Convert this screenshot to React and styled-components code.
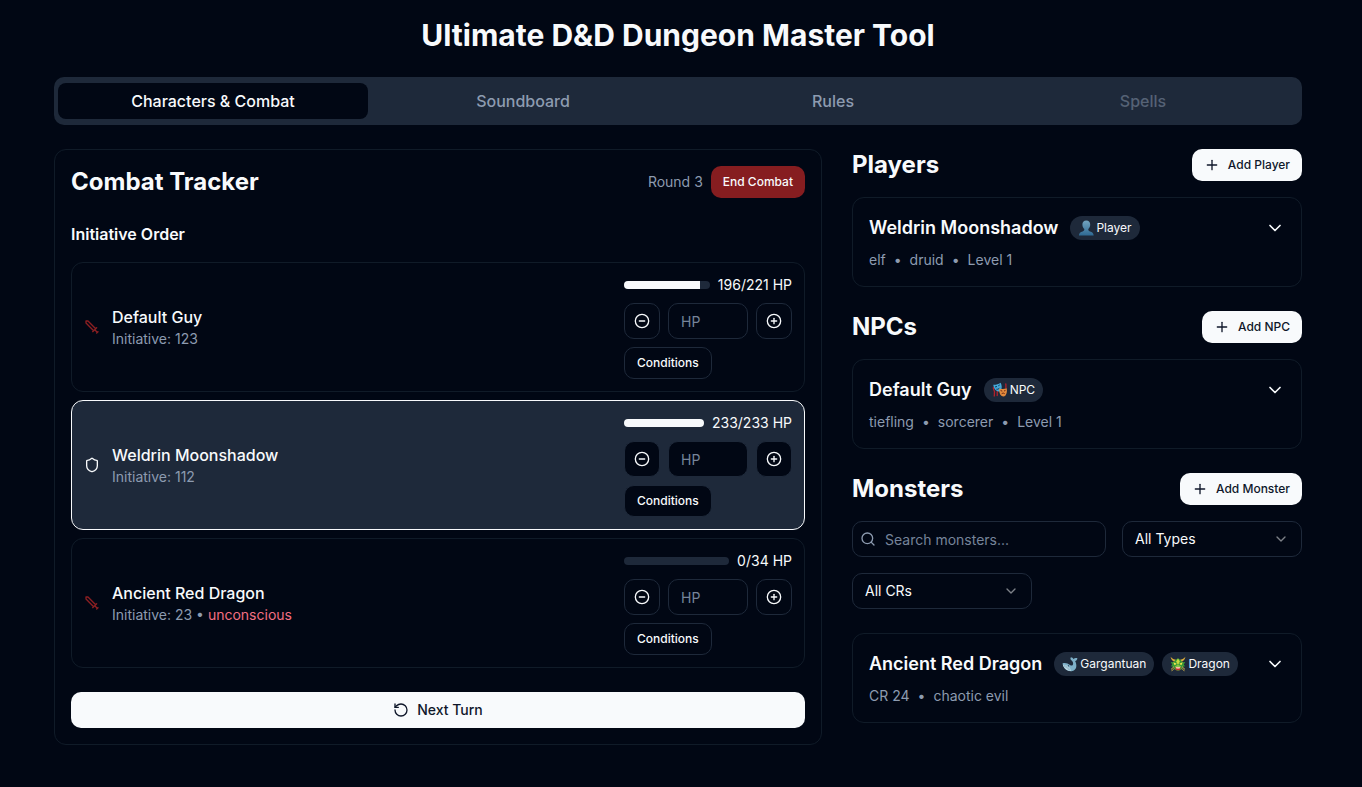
import React from "react";
import styled, { createGlobalStyle, css } from "styled-components";
import {
  ChevronDown,
  CircleMinus,
  CirclePlus,
  Plus,
  RotateCcw,
  Search,
  Shield,
} from "lucide-react";

const color = {
  background: "#010714",
  foreground: "#f8fafc",
  muted: "#1e293a",
  mutedText: "#8d9bb0",
  placeholder: "#76849a",
  faintBorder: "#101b28",
  destructive: "#861d20",
  sword: "#8c1f22",
  rose: "#f26f82",
  ink: "#0f172a",
};

const GlobalStyle = createGlobalStyle`
  *, *::before, *::after { box-sizing: border-box; }
  body {
    margin: 0;
    background: ${color.background};
    color: ${color.foreground};
    font-family: Inter, "Liberation Sans", sans-serif;
    font-size: 16px;
    line-height: 24px;
  }
  h1, h2, h3, p, ul { margin: 0; padding: 0; }
  ul { list-style: none; }
  button, input, select { font: inherit; color: inherit; margin: 0; }
  button { cursor: pointer; }
  svg { flex-shrink: 0; }
`;

const Page = styled.div`
  padding: 17px 22px 16px 16px;
`;

const Container = styled.main`
  max-width: 1248px;
  margin: 0 auto;
  display: flex;
  flex-direction: column;
  gap: 24px;
`;

const Title = styled.h1`
  font-size: 30px;
  line-height: 36px;
  font-weight: 700;
  text-align: center;
`;

const Tabs = styled.nav`
  display: grid;
  grid-template-columns: repeat(4, 1fr);
  align-items: center;
  height: 48px;
  padding: 4px;
  border-radius: 10px;
  background: ${color.muted};
`;

const Tab = styled.button`
  height: 36px;
  border: 0;
  border-radius: 8px;
  font-weight: 500;
  background: ${(p) => (p.$active ? color.background : "transparent")};
  color: ${(p) => (p.$active ? color.foreground : color.mutedText)};
  &:disabled { opacity: 0.5; cursor: default; }
`;

const Columns = styled.div`
  display: grid;
  grid-template-columns: minmax(0, 1fr) 450px;
  gap: 30px;
  align-items: start;
`;

const Tracker = styled.section`
  padding: 16px;
  border: 1px solid ${color.faintBorder};
  border-radius: 12px;
  display: flex;
  flex-direction: column;
  gap: 24px;
`;

const HeaderRow = styled.header`
  display: flex;
  align-items: center;
  justify-content: space-between;
`;

const Heading = styled.h2`
  font-size: 24px;
  line-height: 32px;
  font-weight: 700;
`;

const RoundStatus = styled.div`
  display: flex;
  align-items: center;
  gap: 8px;
  font-size: 14px;
  line-height: 20px;
  color: ${color.mutedText};
`;

const Button = styled.button`
  display: inline-flex;
  align-items: center;
  justify-content: center;
  gap: 8px;
  height: 32px;
  padding: 0 12px;
  border: 0;
  border-radius: 10px;
  font-size: 12px;
  line-height: 16px;
  font-weight: 500;
  background: ${color.foreground};
  color: ${color.ink};
  ${(p) => p.$variant === "danger" && css`
    background: ${color.destructive};
    color: ${color.foreground};
  `}
  ${(p) => p.$variant === "outline" && css`
    background: ${color.background};
    color: ${color.foreground};
    border: 1px solid ${color.muted};
  `}
  ${(p) => p.$size === "icon" && css`
    width: 36px;
    height: 36px;
    padding: 0;
  `}
  ${(p) => p.$size === "wide" && css`
    width: 100%;
    height: 36px;
    font-size: 14px;
    line-height: 20px;
  `}
`;

const Initiative = styled.div`
  display: flex;
  flex-direction: column;
  gap: 16px;
`;

const SubHeading = styled.h3`
  font-size: 16px;
  line-height: 24px;
  font-weight: 600;
`;

const CombatantList = styled.ul`
  display: flex;
  flex-direction: column;
  gap: 8px;
`;

const CombatantRow = styled.li`
  display: flex;
  align-items: center;
  gap: 12px;
  padding: 12px;
  border: 1px solid ${(p) => (p.$current ? color.foreground : color.faintBorder)};
  border-radius: 12px;
  background: ${(p) => (p.$current ? color.muted : "transparent")};
`;

const CombatantInfo = styled.div`
  flex: 1;
  min-width: 0;
`;

const CombatantName = styled.p`
  font-weight: 500;
`;

const SmallText = styled.p`
  font-size: 14px;
  line-height: 20px;
  color: ${color.mutedText};
`;

const Condition = styled.span`
  color: ${color.rose};
`;

const Controls = styled.div`
  width: 168px;
  display: flex;
  flex-direction: column;
  align-items: flex-start;
  gap: 8px;
`;

const ControlLine = styled.div`
  width: 100%;
  display: flex;
  align-items: center;
  gap: 8px;
  font-size: 14px;
  line-height: 20px;
`;

const HealthTrack = styled.div`
  flex: 1;
  height: 8px;
  border-radius: 4px;
  overflow: hidden;
  background: ${color.muted};
`;

const HealthFill = styled.div`
  height: 100%;
  background: ${color.foreground};
`;

const HpInput = styled.input`
  width: 80px;
  height: 36px;
  padding: 0 12px;
  border: 1px solid ${color.muted};
  border-radius: 10px;
  background: ${color.background};
  &::placeholder { color: ${color.placeholder}; opacity: 1; }
`;

const Roster = styled.div`
  display: flex;
  flex-direction: column;
  gap: 24px;
`;

const RosterSection = styled.section`
  display: flex;
  flex-direction: column;
  gap: 16px;
`;

const Filters = styled.div`
  display: flex;
  flex-wrap: wrap;
  gap: 16px;
  margin-bottom: 8px;
  font-size: 14px;
  line-height: 20px;
`;

const SearchBox = styled.label`
  flex: 1;
  min-width: 200px;
  height: 36px;
  padding: 0 8px 0 7px;
  display: flex;
  align-items: center;
  gap: 9px;
  border: 1px solid ${color.muted};
  border-radius: 10px;
  color: ${color.mutedText};
`;

const SearchInput = styled.input`
  flex: 1;
  min-width: 0;
  height: 100%;
  padding: 0;
  border: 0;
  outline: 0;
  background: transparent;
  color: ${color.foreground};
  &::placeholder { color: ${color.placeholder}; opacity: 1; }
`;

const SelectBox = styled.div`
  position: relative;
  width: 180px;
  height: 36px;
  svg {
    position: absolute;
    right: 13px;
    top: 10px;
    opacity: 0.5;
    pointer-events: none;
  }
`;

const Select = styled.select`
  appearance: none;
  width: 100%;
  height: 100%;
  padding: 0 36px 0 12px;
  border: 1px solid ${color.muted};
  border-radius: 10px;
  background: transparent;
`;

const CreatureCardBox = styled.article`
  padding: 16px;
  border: 1px solid ${color.faintBorder};
  border-radius: 12px;
  display: flex;
  flex-direction: column;
  gap: 8px;
`;

const CreatureTop = styled.div`
  display: flex;
  align-items: center;
  height: 28px;
  gap: 8px;
`;

const CreatureName = styled.h3`
  font-size: 18px;
  line-height: 28px;
  font-weight: 600;
  margin-right: 4px;
`;

const Badge = styled.span`
  display: inline-flex;
  align-items: center;
  gap: 2px;
  height: 24px;
  padding: 0 8px;
  border-radius: 12px;
  font-size: 12px;
  line-height: 16px;
  background: ${color.muted};
`;

const ExpandButton = styled.button`
  display: flex;
  margin-left: auto;
  padding: 0;
  border: 0;
  background: transparent;
`;

const Meta = styled.div`
  display: flex;
  gap: 8px;
  font-size: 14px;
  line-height: 20px;
  color: ${color.mutedText};
`;

const SwordIcon = () => (
  <svg
    width="16"
    height="16"
    viewBox="0 0 24 24"
    fill="none"
    stroke={color.sword}
    strokeWidth="2"
    strokeLinecap="round"
    strokeLinejoin="round"
    aria-hidden="true"
  >
    <path d="M14.5 17.5L3 6V3h3l11.500 11.500M13 19l6-6M16 16l4 4M19 21l2-2" />
  </svg>
);

const PersonIcon = () => (
  <svg width="16" height="16" viewBox="0 0 16 16" aria-hidden="true">
    <defs>
      <linearGradient id="bust" x1="0" y1="0" x2="0" y2="1">
        <stop offset="0" stopColor="#74a5c0" />
        <stop offset="1" stopColor="#2f6a94" />
      </linearGradient>
    </defs>
    <path
      fill="url(#bust)"
      d="M8.300.4c2.600 0 4 1.800 3.900 4.300-.1 2-.9 3.400-1.900 4.300-.1 1.300.3 1.900 1.700 2.400 2.200.7 3.500 1.400 3.700 4H.9c.2-2.600 1.500-3.300 3.700-4 1.400-.5 1.800-1.100 1.700-2.400-1-.9-1.800-2.300-1.900-4.300C4.300 2.200 5.700.4 8.300.4z"
    />
  </svg>
);

const MasksIcon = () => (
  <svg width="16" height="16" viewBox="0 0 16 16" aria-hidden="true">
    <path d="M1.500 5c-1 2 1.500 3.500 1 5.500S3 13 2 14.500M13.500 1.500c1.200 1.500-.3 3 .7 5M5.500 9c-1 2 .5 3-.5 5" fill="none" stroke="#b3222c" strokeWidth="1.300" />
    <path d="M1.300 2.800C4 3 6 2.300 8.600.8c1.200 2.400 1.600 5.200.5 7.200-.8 1.400-2.200 1.800-3.600 1.300C2.800 8.300 1.500 5.600 1.300 2.800z" fill="#45a9d8" />
    <path d="M3 5l2-.5M6.300 3.800l1.400-.8M4.400 7.200c1.300.3 2.400-.2 3.200-1.400" fill="none" stroke="#0d3658" strokeWidth="1" />
    <path d="M7.300 6.500c2.400.8 4.800.8 7.400-.2.500 2.600.3 5.300-1.200 7.100-1 1.200-2.500 1.400-3.800.6-2.200-1.400-2.700-4.600-2.400-7.500z" fill="#e38b3d" />
    <path d="M8.600 8.600l1.700.5M12 9l1.500-.6M9.500 12.100c.7-1.200 2.200-1.400 3.200-.4" fill="none" stroke="#6f2b16" strokeWidth="1" />
  </svg>
);

const WhaleIcon = () => (
  <svg width="16" height="16" viewBox="0 0 16 16" aria-hidden="true">
    <path d="M.5 7.500C2.800 6.500 5.800 7.400 8 9c1.800 1.200 3.200.3 3.100-1.800C11 5.800 10.200 5 9.300 4.200 8.200 3.300 8.200 2 8.900 1.200c1.200.2 2.200.8 2.600 1.800 1-1 2.300-1.300 3.900-.8-.1 1.500-.9 2.500-2.300 2.800 2.200 4.200 1.700 9-2.700 10C5.600 16 1.300 12.500.5 7.500z" fill="#7eb0c8" />
    <path d="M1 9c2.200-.5 4.600.5 6.300 2.300 1.100 1.200 1.600 2.400 1.500 3.700C4.900 15 1.900 12.500 1 9z" fill="#bcd7e1" />
    <path d="M2 10.500c2 .4 4 1.600 5.500 4M2 9.400c2.500.5 4.600 2 6 4.500" fill="none" stroke="#6f9fb8" strokeWidth=".5" />
    <circle cx="6.500" cy="9.800" r=".6" fill="#12263b" />
  </svg>
);

const DragonIcon = () => (
  <svg width="16" height="16" viewBox="0 0 16 16" aria-hidden="true">
    <path d="M.6.8C1 3.500 2.500 5 4.500 6l2-2C4.200 3.600 2 2.800.6.8zM15.400.8C15 3.500 13.500 5 11.500 6l-2-2c2.300-.4 4.500-1.200 5.900-3.200z" fill="#dfae3b" />
    <path d="M.8 6l2.700.2L5.300 4 8 2.300 10.700 4l1.800 2.200 2.700-.2-1.400 2.500 1.200 1.700-2 .6-1.200 2.500L8 15l-3.800-1.700L3 10.800l-2-.6 1.200-1.700z" fill="#389638" />
    <path d="M8 2.500l1.900 3L8 9 6.100 5.500z" fill="#c9da3e" />
    <path d="M3.300 6.300l3.500 1.500-2.200 1.400zM12.700 6.300L9.200 7.800l2.200 1.400z" fill="#f5e94b" />
    <path d="M5 10.300L8 8.800l3 1.500-.7 1.500H5.700z" fill="#8bc846" />
    <path d="M5.200 11.200h5.600L10 14.300H6z" fill="#cf2f2d" />
    <path d="M5.700 11.200h4.600l-.8 1.200h-3z" fill="#fff1d5" />
    <path d="M4 10.800c-2 .2-.8 2.200-3 2.400M4.300 12.500c-1.500.2-.8 2-2.800 2.300M12 10.800c2 .2.800 2.200 3 2.400M11.700 12.500c1.500.2.800 2 2.800 2.300" fill="none" stroke="#cdb04a" strokeWidth=".9" />
  </svg>
);

const combatants = [
  { name: "Default Guy", initiative: 123, hp: 196, max: 221 },
  { name: "Weldrin Moonshadow", initiative: 112, hp: 233, max: 233, player: true, current: true },
  { name: "Ancient Red Dragon", initiative: 23, hp: 0, max: 34, condition: "unconscious" },
];

function Combatant({ name, initiative, hp, max, player, current, condition }) {
  return (
    <CombatantRow $current={current}>
      {player ? <Shield size={16} /> : <SwordIcon />}
      <CombatantInfo>
        <CombatantName>{name}</CombatantName>
        <SmallText>
          Initiative: {initiative}
          {condition && <> • <Condition>{condition}</Condition></>}
        </SmallText>
      </CombatantInfo>
      <Controls>
        <ControlLine>
          <HealthTrack>
            <HealthFill style={{ width: `${(hp / max) * 100}%` }} />
          </HealthTrack>
          <span>{hp}/{max} HP</span>
        </ControlLine>
        <ControlLine>
          <Button $variant="outline" $size="icon" aria-label={`Damage ${name}`}>
            <CircleMinus size={16} />
          </Button>
          <HpInput placeholder="HP" aria-label={`HP change for ${name}`} />
          <Button $variant="outline" $size="icon" aria-label={`Heal ${name}`}>
            <CirclePlus size={16} />
          </Button>
        </ControlLine>
        <Button $variant="outline">Conditions</Button>
      </Controls>
    </CombatantRow>
  );
}

function CreatureCard({ name, badges, meta }) {
  return (
    <CreatureCardBox>
      <CreatureTop>
        <CreatureName>{name}</CreatureName>
        {badges.map(({ label, Icon }) => (
          <Badge key={label}><Icon />{label}</Badge>
        ))}
        <ExpandButton aria-label={`Expand ${name}`}>
          <ChevronDown size={20} />
        </ExpandButton>
      </CreatureTop>
      <Meta>
        {meta.map((item, i) => (
          <React.Fragment key={item}>
            {i > 0 && <span>•</span>}
            <span>{item}</span>
          </React.Fragment>
        ))}
      </Meta>
    </CreatureCardBox>
  );
}

function SectionHeader({ title, action }) {
  return (
    <HeaderRow>
      <Heading>{title}</Heading>
      <Button><Plus size={16} />{action}</Button>
    </HeaderRow>
  );
}

function FilterSelect({ label, option }) {
  return (
    <SelectBox>
      <Select aria-label={label}>
        <option>{option}</option>
      </Select>
      <ChevronDown size={16} />
    </SelectBox>
  );
}

export default function App() {
  return (
    <Page>
      <GlobalStyle />
      <Container>
        <Title>Ultimate D&amp;D Dungeon Master Tool</Title>
        <Tabs>
          <Tab $active>Characters &amp; Combat</Tab>
          <Tab>Soundboard</Tab>
          <Tab>Rules</Tab>
          <Tab disabled>Spells</Tab>
        </Tabs>
        <Columns>
          <Tracker>
            <HeaderRow>
              <Heading>Combat Tracker</Heading>
              <RoundStatus>
                <span>Round 3</span>
                <Button $variant="danger">End Combat</Button>
              </RoundStatus>
            </HeaderRow>
            <Initiative>
              <SubHeading>Initiative Order</SubHeading>
              <CombatantList>
                {combatants.map((c) => <Combatant key={c.name} {...c} />)}
              </CombatantList>
            </Initiative>
            <Button $size="wide"><RotateCcw size={16} />Next Turn</Button>
          </Tracker>
          <Roster>
            <RosterSection>
              <SectionHeader title="Players" action="Add Player" />
              <CreatureCard
                name="Weldrin Moonshadow"
                badges={[{ label: "Player", Icon: PersonIcon }]}
                meta={["elf", "druid", "Level 1"]}
              />
            </RosterSection>
            <RosterSection>
              <SectionHeader title="NPCs" action="Add NPC" />
              <CreatureCard
                name="Default Guy"
                badges={[{ label: "NPC", Icon: MasksIcon }]}
                meta={["tiefling", "sorcerer", "Level 1"]}
              />
            </RosterSection>
            <RosterSection>
              <SectionHeader title="Monsters" action="Add Monster" />
              <Filters>
                <SearchBox>
                  <Search size={16} />
                  <SearchInput placeholder="Search monsters..." aria-label="Search monsters" />
                </SearchBox>
                <FilterSelect label="Monster type" option="All Types" />
                <FilterSelect label="Challenge rating" option="All CRs" />
              </Filters>
              <CreatureCard
                name="Ancient Red Dragon"
                badges={[
                  { label: "Gargantuan", Icon: WhaleIcon },
                  { label: "Dragon", Icon: DragonIcon },
                ]}
                meta={["CR 24", "chaotic evil"]}
              />
            </RosterSection>
          </Roster>
        </Columns>
      </Container>
    </Page>
  );
}
